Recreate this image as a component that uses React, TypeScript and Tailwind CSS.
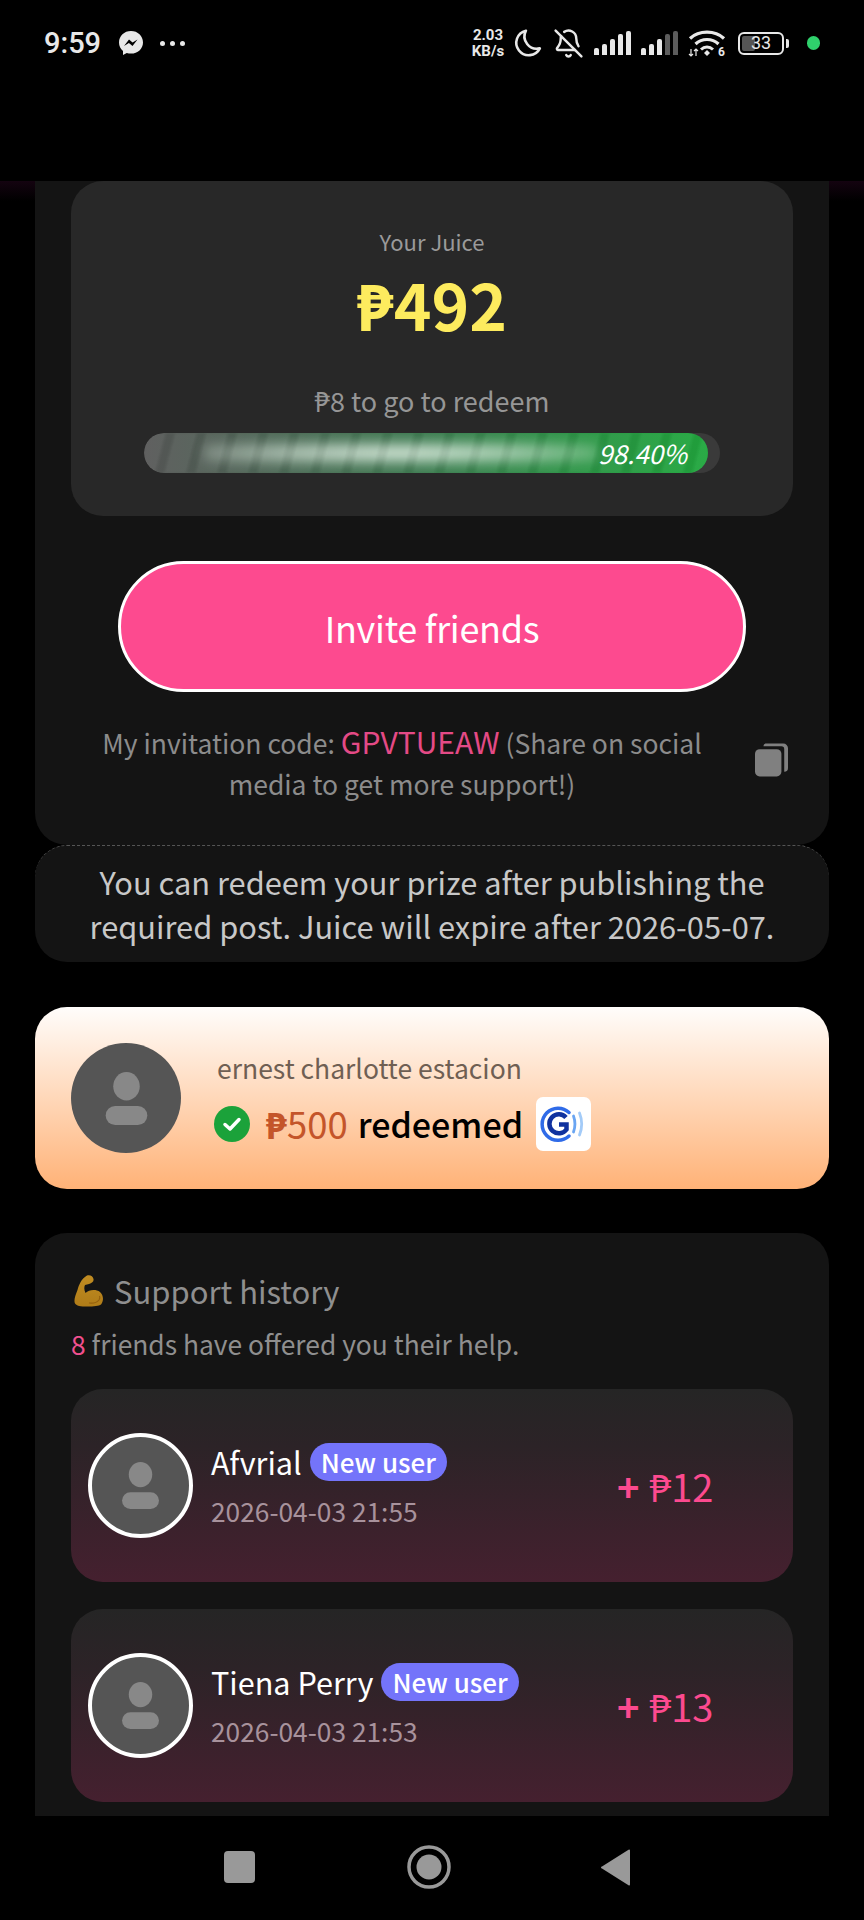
import { BellOff } from 'lucide-react';

const FONT = "font-['Noto_Sans_CJK_SC','Noto_Sans',sans-serif]";

function Signal({ dim = false }: { dim?: boolean }) {
  const heights = [7, 11, 16, 21, 24];
  return (
    <div className="flex items-end gap-[3px] h-[24px]">
      {heights.map((h, i) => (
        <div
          key={i}
          className={`w-[5px] rounded-t-[2px] ${dim && i > 2 ? 'bg-[#5c5c5c]' : 'bg-[#e8e8e8]'}`}
          style={{ height: h }}
        />
      ))}
    </div>
  );
}

function StatusBar() {
  return (
    <div className="h-[181px] shrink-0 bg-black text-[#e8e8e8] relative">
      <div className="h-[86px] flex items-center pl-[44px] pr-[44px]">
        <span className="font-['Roboto',sans-serif] font-medium text-[29px] leading-none w-[74px]">9:59</span>
        {/* messenger */}
        <svg width="26" height="26" viewBox="0 0 26 26">
          <path d="M13 1C6.2 1 1 5.900 1 12.400c0 3.500 1.500 6.500 4 8.500V25l3.800-2.100c1.300.4 2.700.6 4.200.6 6.800 0 12-4.900 12-11.100C25 5.900 19.800 1 13 1z" fill="#e8e8e8" />
          <path d="M6 16l5-6.500 3.600 3 4.900-3-5 6.500-3.600-3z" fill="#000" />
        </svg>
        <div className="flex gap-[5px] ml-[16px]">
          <div className="w-[5px] h-[5px] rounded-full bg-[#e8e8e8]" />
          <div className="w-[5px] h-[5px] rounded-full bg-[#e8e8e8]" />
          <div className="w-[5px] h-[5px] rounded-full bg-[#e8e8e8]" />
        </div>
        <div className="flex-1" />
        <div className="w-[36px] font-['Roboto',sans-serif] font-bold text-[15px] leading-[16px] text-center">
          <div>2.03</div>
          <div>KB/s</div>
        </div>
        {/* moon */}
        <svg width="30" height="30" viewBox="0 0 28 28" fill="none" className="ml-[6px]">
          <path d="M13 2.500A11.600 11.600 0 1 0 26 19 11.500 11.500 0 0 1 13 2.500z" stroke="#e8e8e8" strokeWidth="2.400" strokeLinejoin="round" />
        </svg>
        <BellOff size={31} strokeWidth={1.9} className="ml-[11px] text-[#e8e8e8]" />
        <div className="ml-[10px]">
          <Signal />
        </div>
        <div className="ml-[10px]">
          <Signal dim />
        </div>
        {/* wifi */}
        <svg width="38" height="32" viewBox="0 0 38 32" fill="none" className="ml-[10px]">
          <path d="M2 11.500C11 3 27 3 36 11.500" stroke="#e8e8e8" strokeWidth="3.200" />
          <path d="M7.500 17c6.500-6 16.500-6 23 0" stroke="#e8e8e8" strokeWidth="3.200" />
          <path d="M13 22.500c3.500-3.200 8.500-3.200 12 0" stroke="#e8e8e8" strokeWidth="3" />
          <path d="M16 26l3-3 3 3-3 3z" fill="#e8e8e8" />
          <path d="M3 22v7M1 27l2 2 2-2M8 29v-7M6 24l2-2 2 2" stroke="#e8e8e8" strokeWidth="1.200" />
          <text x="30" y="29" fontSize="12" fontWeight="700" fill="#e8e8e8" fontFamily="Roboto, sans-serif">6</text>
        </svg>
        {/* battery */}
        <div className="ml-[12px] flex items-center">
          <div className="relative w-[46px] h-[23px] rounded-[6px] border-2 border-[#e8e8e8] flex items-center overflow-hidden p-[2px]">
            <div className="h-full w-[33%] bg-[#555] rounded-[2px]" />
            <span className="absolute inset-0 flex items-center justify-center font-['Roboto',sans-serif] text-[18px] leading-none">33</span>
          </div>
          <div className="w-[3px] h-[9px] ml-[2px] rounded-r-[2px] bg-[#e8e8e8]" />
        </div>
        <div className="ml-[18px] w-[13px] h-[14px] rounded-full bg-[#2fd16c]" />
      </div>
    </div>
  );
}

function Avatar({ size, ring = false, glyph }: { size: string; ring?: boolean; glyph: number }) {
  return (
    <div className={`${size} ${ring ? 'border-[4px] border-white' : ''} shrink-0 rounded-full bg-[#555555] flex items-center justify-center`}>
      <svg width={glyph} height={glyph} viewBox="0 0 44 56">
        <ellipse cx="22" cy="15" rx="14" ry="15" fill="#888888" />
        <rect x="0" y="36" width="44" height="20" rx="10" fill="#888888" />
      </svg>
    </div>
  );
}

function ProgressBar() {
  return (
    <div className="mx-[73px] mt-[14px] h-[40px] rounded-full bg-[#3a3a3a] overflow-hidden">
      <div className="relative h-full w-[564px] rounded-full overflow-hidden bg-[linear-gradient(to_right,#5a5a5a_0%,#4e6556_20%,#3a7a4e_50%,#2c9346_75%,#22a83f_100%)]">
        <div className="absolute left-[60px] right-[110px] top-[9px] bottom-[9px] blur-[6px] bg-[radial-gradient(ellipse_at_center,rgba(225,240,228,0.95)_0%,rgba(225,240,228,0.65)_40%,rgba(225,240,228,0.25)_75%,rgba(225,240,228,0)_100%)]" />
        <div className="absolute inset-0 blur-[1.5px] bg-[repeating-linear-gradient(105deg,rgba(255,255,255,0.04)_0px,rgba(255,255,255,0.04)_21px,rgba(0,0,0,0.05)_21px,rgba(0,0,0,0.05)_30px)]" />
        <span className="absolute right-[21px] top-0 h-full flex items-center italic text-[26px] text-white leading-none">98.40%</span>
      </div>
    </div>
  );
}

function MuscleEmoji() {
  return (
    <svg width="30" height="32" viewBox="0 0 30 32">
      <defs>
        <linearGradient id="muscle" x1="0" y1="0" x2="0" y2="1">
          <stop offset="0" stopColor="#c08c22" />
          <stop offset="1" stopColor="#b07c18" />
        </linearGradient>
      </defs>
      <path d="M13 .5C16-.5 19 1 19.500 4 20 6.500 18 8 15 9l-4 1c-1 2-1 5 .5 8C15 14.500 22 14 26 17c3.500 3 4 9 1 12.500C25 31 20 31.500 13 31.500 7 31.500 2 31 .8 28-.3 25 1.500 20 3.500 15 5 10 7 4 13 .5z" fill="url(#muscle)" />
      <path d="M15 28c4 .5 8-.5 10-3 1-1.500 1-3 .5-4" stroke="#94600e" strokeWidth="1.200" fill="none" />
    </svg>
  );
}

function GCashLogo() {
  return (
    <div className="w-[55px] h-[54px] shrink-0 rounded-[7px] bg-white">
      <svg width="55" height="54" viewBox="0 0 55 54" fill="none">
        <path d="M33 15.500A16 16 0 1 0 33 39" stroke="#2f6be8" strokeWidth="3.500" strokeLinecap="round" />
        <path d="M30 20.500A9.500 9.500 0 1 0 30.500 32.500V27.500H23" stroke="#10329f" strokeWidth="4.500" />
        <path d="M37.500 19c1.800 5 1.800 11 0 16" stroke="#6aa5f2" strokeWidth="2.800" strokeLinecap="round" />
        <path d="M43.500 16c2.800 7 2.800 15 0 22" stroke="#a3cbf8" strokeWidth="2.800" strokeLinecap="round" />
      </svg>
    </div>
  );
}

function SupportRow({ name, time, amount }: { name: string; time: string; amount: string }) {
  return (
    <div className="h-[193px] rounded-[32px] bg-[linear-gradient(to_bottom,#252525_0%,#2c2327_30%,#45202f_100%)] flex items-center pl-[17px]">
      <Avatar size="w-[105px] h-[105px]" ring glyph={47} />
      <div className="ml-[18px] w-[406px] -mt-[2px]">
        <div className="flex items-center gap-[8px]">
          <span className="text-[30.6px] leading-[42px] text-white">{name}</span>
          <span className="h-[38px] px-[11px] rounded-full bg-[#7474fa] text-white text-[26px] font-medium leading-[36px] flex items-center">New user</span>
        </div>
        <div className="text-[26.3px] leading-[36px] mt-[10px] text-[#a8929c]">{time}</div>
      </div>
      <div className="flex items-center text-[38px] leading-none text-[#fc4a8f]">
        <span className="font-bold">+</span>
        <span className="ml-[10px]">{amount}</span>
      </div>
    </div>
  );
}

export default function App() {
  return (
    <div className={`w-[864px] h-[1920px] bg-black flex flex-col overflow-hidden ${FONT}`}>
      <StatusBar />

      <div className="flex-1 min-h-0 overflow-hidden px-[35px] bg-[linear-gradient(to_bottom,#140310,#000000_20px)]">
        {/* juice card */}
        <div className="bg-[#141414] rounded-b-[32px] h-[664px] px-[36px]">
          <div className="h-[335px] rounded-[32px] bg-[#282828] pt-[46px] text-center">
            <div className="text-[22px] leading-[28px] text-[#9a9a9a]">Your Juice</div>
            <div className="text-[64px] leading-[80px] mt-[8px] font-bold text-[#fdeb5e]">₱492</div>
            <div className="text-[27px] leading-[36px] mt-[40px] text-[#969696]">₱8 to go to redeem</div>
            <ProgressBar />
          </div>
          <div className="mt-[45px] mx-[47px] h-[131px] rounded-full border-[3px] border-white bg-[#fd4a8f] flex items-center justify-center text-[36px] tracking-[-0.3px] text-white">
            Invite friends
          </div>
          <div className="mt-[29px] flex items-center">
            <div className="w-[662px] text-center text-[26.5px] leading-[41px] text-[#8c8c8c]">
              My invitation code: <span className="text-[30px] text-[#e44a86]">GPVTUEAW</span> (Share on social
              <br />
              media to get more support!)
            </div>
            <svg width="33" height="34" viewBox="0 0 35 35" className="ml-[22px] mb-[5px]">
              <path d="M11 0h19a5 5 0 0 1 5 5v21a4 4 0 0 1-4 4V6a3 3 0 0 0-3-3H9a3 3 0 0 1 2-3z" fill="#808080" />
              <rect x="0" y="6" width="28" height="29" rx="5" fill="#808080" />
            </svg>
          </div>
        </div>

        {/* expire note */}
        <div className="h-[117px] bg-[#141414] rounded-[32px] border-t border-dashed border-[#555555] flex items-center justify-center text-center text-[30.8px] leading-[44px] text-[#c8c8c8]">
          You can redeem your prize after publishing the
          <br />
          required post. Juice will expire after 2026-05-07.
        </div>

        {/* redeemed banner */}
        <div className="mt-[45px] h-[182px] rounded-[32px] bg-[linear-gradient(to_bottom,#fffdfb,#ffb277)] flex items-center pl-[36px]">
          <Avatar size="w-[110px] h-[110px]" glyph={53} />
          <div className="ml-[33px]">
            <div className="text-[26.5px] leading-[36px] text-[#6f5f53] ml-[3px] mt-[4px]">ernest charlotte estacion</div>
            <div className="flex items-center mt-[11px]">
              <svg width="36" height="36" viewBox="0 0 36 36">
                <circle cx="18" cy="18" r="18" fill="#1ba23a" />
                <path d="M11 18.500l5 4.500 9-9.500" stroke="#fff" strokeWidth="3.500" fill="none" strokeLinecap="round" strokeLinejoin="round" />
              </svg>
              <span className="ml-[16px] text-[36.500px] leading-[46px] text-[#c4552a]">
                <span className="font-bold">₱</span>500
              </span>
              <span className="ml-[10px] text-[34px] font-medium leading-[46px] text-black">redeemed</span>
              <div className="ml-[13px]">
                <GCashLogo />
              </div>
            </div>
          </div>
        </div>

        {/* support history */}
        <div className="mt-[44px] bg-[#141414] rounded-t-[32px] h-[700px] px-[36px] pt-[40px]">
          <div className="flex items-center">
            <div className="ml-[3px]">
              <MuscleEmoji />
            </div>
            <span className="ml-[10px] text-[31px] leading-[36px] text-[#8f8f8f]">Support history</span>
          </div>
          <div className="text-[26.400px] leading-[36px] mt-[17px] text-[#8f8f8f]">
            <span className="text-[#f0508f]">8</span> friends have offered you their help.
          </div>
          <div className="mt-[27px] flex flex-col gap-[27px]">
            <SupportRow name="Afvrial" time="2026-04-03 21:55" amount="₱12" />
            <SupportRow name="Tiena Perry" time="2026-04-03 21:53" amount="₱13" />
          </div>
        </div>
      </div>

      {/* nav bar */}
      <div className="h-[104px] shrink-0 bg-black flex items-center pb-[2px]">
        <div className="ml-[224px] w-[31px] h-[32px] rounded-[4px] bg-[#999999]" />
        <svg width="44" height="44" viewBox="0 0 44 44" className="ml-[152px]">
          <circle cx="22" cy="22" r="20" fill="none" stroke="#999999" strokeWidth="3.500" />
          <circle cx="22" cy="22" r="12.500" fill="#999999" />
        </svg>
        <svg width="30" height="37" viewBox="0 0 30 37" className="ml-[150px]">
          <path d="M29 1.500v34a1 1 0 0 1-1.500.8L1 19.500a1 1 0 0 1 0-2L27.500.7A1 1 0 0 1 29 1.500z" fill="#999999" />
        </svg>
      </div>
    </div>
  );
}
